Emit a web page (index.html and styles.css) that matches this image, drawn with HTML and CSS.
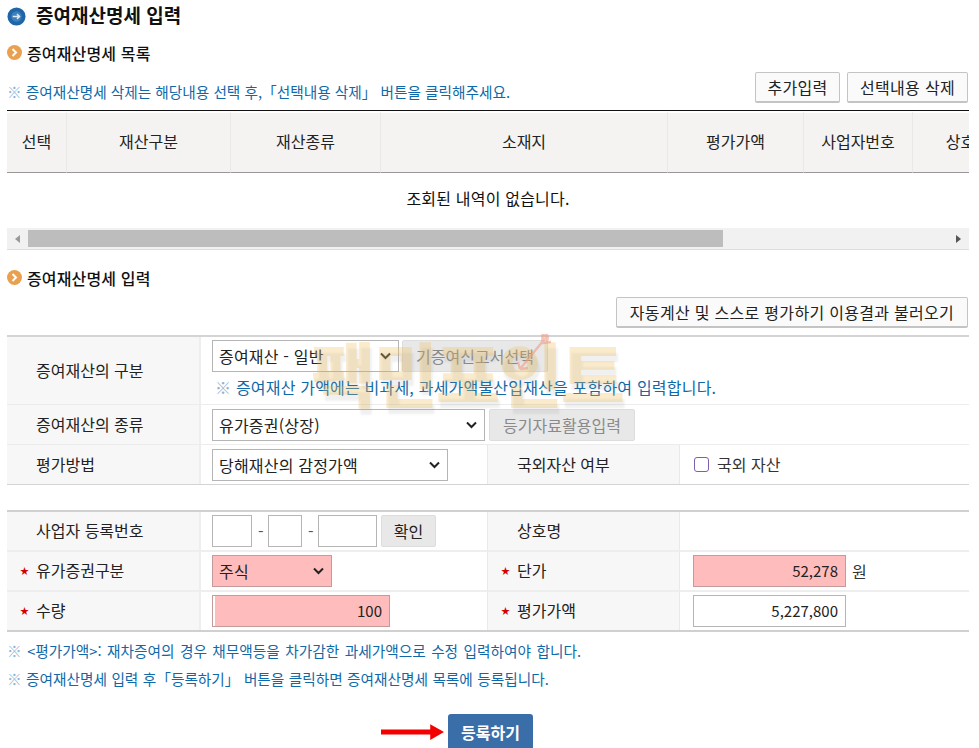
FILE: index.html
```html
<!DOCTYPE html>
<html lang="ko">
<head>
<meta charset="utf-8">
<title>증여재산명세 입력</title>
<link rel="stylesheet" href="styles.css">
</head>
<body>
<div class="page">
  <h1 class="title">
    <svg class="ico-blue" viewBox="0 0 20 20"><circle cx="10" cy="10" r="9.500" fill="#1f66a8"/><circle cx="10" cy="10" r="5.500" fill="#3f7fba"/><path d="M6 10h7M10.500 7.500 13.200 10l-2.700 2.500" fill="none" stroke="#dfe9f3" stroke-width="1.500"/></svg>
    <span>증여재산명세 입력</span>
  </h1>
  <h2 class="sub first">
    <svg class="ico-orange" viewBox="0 0 15 15"><circle cx="7.500" cy="7.500" r="7.500" fill="#e9a04f"/><path d="M5.500 4 9 7.500 5.500 11" fill="none" stroke="#fff" stroke-width="2"/></svg>
    <span>증여재산명세 목록</span>
  </h2>
  <div class="listbar">
    <p class="note"><span class="mark">※</span> 증여재산명세 삭제는 해당내용 선택 후,「선택내용 삭제」 버튼을 클릭해주세요.</p>
    <div class="btns">
      <button class="btn b-add">추가입력</button>
      <button class="btn b-del">선택내용 삭제</button>
    </div>
  </div>

  <div class="gridwrap">
    <table class="grid">
      <colgroup>
        <col class="c1"><col class="c2"><col class="c3"><col class="c4"><col class="c5"><col class="c6"><col class="c7">
      </colgroup>
      <thead>
        <tr><th>선택</th><th>재산구분</th><th>재산종류</th><th>소재지</th><th>평가가액</th><th>사업자번호</th><th>상호</th></tr>
      </thead>
      <tbody>
        <tr><td colspan="7" class="empty">조회된 내역이 없습니다.</td></tr>
      </tbody>
    </table>
    <div class="scroll">
      <span class="arr left"></span>
      <div class="track"><div class="thumb"></div></div>
      <span class="arr right"></span>
    </div>
  </div>

  <h2 class="sub second">
    <svg class="ico-orange" viewBox="0 0 15 15"><circle cx="7.500" cy="7.500" r="7.500" fill="#e9a04f"/><path d="M5.500 4 9 7.500 5.500 11" fill="none" stroke="#fff" stroke-width="2"/></svg>
    <span>증여재산명세 입력</span>
  </h2>
  <div class="autobar"><button class="btn b-auto">자동계산 및 스스로 평가하기 이용결과 불러오기</button></div>

  <div class="formwrap">
    <div class="watermark" aria-hidden="true">팩민포인트</div>
    <svg class="dart" viewBox="0 0 40 44" aria-hidden="true"><path d="M36 4 8 38M8 38l-2-7M8 38l8-1M36 4l-7 1M36 4l-1 7M31 3l-1 9 9-1" fill="none" stroke="#ee9d85" stroke-width="2.500" opacity=".6"/></svg>
    <table class="form f1">
      <colgroup><col class="l1"><col class="v1"><col class="l2"><col class="v2"></colgroup>
      <tr class="r-a">
        <th>증여재산의 구분</th>
        <td colspan="3">
          <div class="line">
            <div class="sel s-a">증여재산 - 일반<svg class="chev" viewBox="0 0 12 8"><path d="M1.500 1.500 6 6l4.500-4.500" fill="none" stroke="#222" stroke-width="2"/></svg></div>
            <button class="gbtn dis g-a">기증여신고서선택</button>
          </div>
          <p class="note inner"><span class="mark">※</span> 증여재산 가액에는 비과세, 과세가액불산입재산을 포함하여 입력합니다.</p>
        </td>
      </tr>
      <tr class="r-b">
        <th>증여재산의 종류</th>
        <td colspan="3">
          <div class="line">
            <div class="sel s-b">유가증권(상장)<svg class="chev" viewBox="0 0 12 8"><path d="M1.500 1.500 6 6l4.500-4.500" fill="none" stroke="#222" stroke-width="2"/></svg></div>
            <button class="gbtn dis g-b">등기자료활용입력</button>
          </div>
        </td>
      </tr>
      <tr class="r-c">
        <th>평가방법</th>
        <td>
          <div class="sel s-c">당해재산의 감정가액<svg class="chev" viewBox="0 0 12 8"><path d="M1.500 1.500 6 6l4.500-4.500" fill="none" stroke="#222" stroke-width="2"/></svg></div>
        </td>
        <th class="th2">국외자산 여부</th>
        <td><label class="chk"><span class="box"></span>국외 자산</label></td>
      </tr>
    </table>

    <table class="form f2">
      <colgroup><col class="l1"><col class="v1"><col class="l2"><col class="v2"></colgroup>
      <tr class="r-d">
        <th>사업자 등록번호</th>
        <td>
          <div class="line biz">
            <span class="inp w40"></span><span class="dash">-</span><span class="inp w34"></span><span class="dash">-</span><span class="inp w59"></span>
            <button class="gbtn g-c">확인</button>
          </div>
        </td>
        <th class="th2">상호명</th>
        <td></td>
      </tr>
      <tr class="r-e">
        <th><i class="star">★</i>유가증권구분</th>
        <td><div class="sel s-d pink">주식<svg class="chev" viewBox="0 0 12 8"><path d="M1.500 1.500 6 6l4.500-4.500" fill="none" stroke="#222" stroke-width="2"/></svg></div></td>
        <th class="th2"><i class="star">★</i>단가</th>
        <td><div class="line"><span class="inp money pink">52,278</span><span class="won">원</span></div></td>
      </tr>
      <tr class="r-e">
        <th><i class="star">★</i>수량</th>
        <td><span class="inp qty pink">100</span></td>
        <th class="th2"><i class="star">★</i>평가가액</th>
        <td><span class="inp money">5,227,800</span></td>
      </tr>
    </table>
  </div>

  <p class="note n1"><span class="mark">※</span> &lt;평가가액&gt;: 재차증여의 경우 채무액등을 차가감한 과세가액으로 수정 입력하여야 합니다.</p>
  <p class="note n2"><span class="mark">※</span> 증여재산명세 입력 후「등록하기」 버튼을 클릭하면 증여재산명세 목록에 등록됩니다.</p>

  <div class="submitrow">
    <svg class="arrow" viewBox="0 0 64 16"><path d="M0 5.500h50V0l14 8-14 8v-5.500H0z" fill="#f40000"/></svg>
    <button class="submit">등록하기</button>
  </div>
</div>
</body>
</html>
```
FILE: styles.css
```css
* { box-sizing: border-box; }
html, body { margin: 0; padding: 0; background: #fff; overflow: hidden; }
body {
  font-family: "Noto Sans CJK KR", "Noto Sans", sans-serif;
  font-size: 16px;
  color: #222;
}
.page { width: 969px; height: 748px; padding-left: 7px; overflow: hidden; }
.title {
  display: flex; align-items: center; gap: 10px;
  margin: 0; height: 32px;
  font-size: 19px; font-weight: 700; color: #111;
}
.title span { margin-top: -3px; }
.ico-blue { width: 19px; height: 19px; flex: none; }
.sub {
  display: flex; align-items: center; gap: 5px;
  margin: 0; font-size: 16px; font-weight: 500; color: #111;
  height: 20px;
}
.sub span { margin-top: -2px; letter-spacing: .15px; }
.sub.first { margin-top: 12px; }
.sub.second { margin-top: 19px; }
.ico-orange { width: 15px; height: 15px; flex: none; margin-top: -4px; }
.listbar {
  display: flex; justify-content: space-between; align-items: flex-end;
  height: 46px; padding-bottom: 7px;
}
.listbar .note { padding-bottom: 2px; }
.note { margin: 0; font-size: 14.66px; color: #0f69a8; line-height: 18px; }
.mark { color: #8db4d6; }
.btns { display: flex; gap: 7px; padding-right: 1px; }
.btn {
  font: inherit; font-size: 16px; color: #222; letter-spacing: .3px;
  height: 31px; padding: 0;
  background: #fafafa; border: 1px solid #c4c4c4; border-bottom-width: 2px;
  border-radius: 2px;
}
.b-add { width: 85px; } .b-del { width: 121px; } .b-auto { width: 352px; }
.gridwrap { width: 962px; overflow: hidden; }
.grid {
  width: 1002px; table-layout: fixed; border-collapse: separate; border-spacing: 0;
  border-top: 1px solid #111;
}
.c1 { width: 60px; } .c2 { width: 164px; } .c3 { width: 150px; } .c4 { width: 287px; }
.c5 { width: 136px; } .c6 { width: 109px; } .c7 { width: 96px; }
.grid th {
  height: 62px; padding: 0 0 3px;
  background: #f4f3f2; font-weight: 400; font-size: 16px; color: #222;
  border-top: 2px solid #fff; border-bottom: 1px solid #9c9599; border-right: 1px solid #ebe9e8;
}
.empty { height: 55px; text-align: center; font-size: 16px; letter-spacing: .2px; color: #111; padding: 0 40px 5px 0; }
.scroll {
  display: flex; align-items: center; height: 22px; background: #f1f1f1;
  border-bottom: 1px solid #ddd; padding: 2px 0;
}
.arr { width: 21px; flex: none; height: 100%; display: flex; align-items: center; justify-content: center; }
.arr::before { content: ""; width: 0; height: 0; border-top: 4px solid transparent; border-bottom: 4px solid transparent; }
.arr.left::before { border-right: 5px solid #999; }
.arr.right::before { border-left: 5px solid #555; }
.track { flex: 1; height: 100%; }
.thumb { width: 695px; height: 100%; background: #bdbdbd; }
.autobar { display: flex; justify-content: flex-end; padding-right: 1px; margin-top: 8px; }
.formwrap { position: relative; width: 962px; margin-top: 7px; }
.watermark {
  position: absolute; left: 304px; top: -3px; z-index: 2; pointer-events: none;
  font-size: 70px; font-weight: 900; line-height: 80px; letter-spacing: -2px;
  color: rgba(240, 190, 90, .3); white-space: nowrap;
  text-shadow: 2px 6px 2px rgba(130, 130, 130, .12);
}
.dart { position: absolute; left: 505px; top: -4px; width: 40px; height: 44px; z-index: 3; pointer-events: none; }
.form { width: 962px; table-layout: fixed; border-collapse: separate; border-spacing: 0; }
.l1 { width: 194px; } .v1 { width: 286px; } .l2 { width: 193px; } .v2 { width: 289px; }
.form th {
  background: #f7f7f7; font-weight: 400; font-size: 16px; color: #222;
  text-align: left; padding: 0 0 2px 29px; position: relative;
  border-right: 2px solid #eee;
}
.form td { padding: 0 0 0 11px; font-size: 16px; }
.form .th2 { border-left: 1px solid #e9e9e9; border-right: 1px solid #e9e9e9; padding-left: 29px; }
.form .th2 + td { padding-left: 13px; }
.f1 { border-top: 2px solid #d4d4d4; border-bottom: 1px solid #d4d4d4; }
.f2 { border-top: 2px solid #d0d0d0; border-bottom: 2px solid #d0d0d0; margin-top: 25px; }
.form tr + tr th, .form tr + tr td { border-top: 1px solid #ececec; }
.f2 tr + tr th, .f2 tr + tr td { border-top: 2px solid #eee; }
.r-a { height: 67px; } .r-b { height: 40px; } .r-c { height: 40px; }
.r-d { height: 38px; } .r-e { height: 40px; }
.f1 .r-a td { vertical-align: top; padding-top: 3px; }
.line { display: flex; align-items: center; gap: 6px; }
.sel {
  display: flex; align-items: center; justify-content: space-between;
  height: 32px; padding: 0 6px; background: #fff; border: 1px solid #b5b5b5;
  font-size: 16px; color: #222; letter-spacing: .2px;
}
.chev { width: 13px; height: 8px; flex: none; }
.s-a { width: 187px; } .s-b { width: 273px; } .s-c { width: 236px; } .s-d { width: 120px; }
.sel.pink { background: #ffbcbc; border-color: #c49a9a; }
.gbtn {
  font: inherit; font-size: 16px; height: 32px; padding: 0;
  background: #e8e8e8; border: 1px solid #ddd; border-radius: 2px; color: #222;
}
.gbtn.dis { color: #8a8a8a; }
.g-a { width: 146px; margin-left: -3px; } .g-b { width: 146px; margin-left: -2px; } .g-c { width: 55px; margin-left: -2px; }
.note.inner { margin-top: 5px; padding-left: 3px; font-size: 16px; letter-spacing: .2px; line-height: 20px; }
.chk { display: inline-flex; align-items: center; gap: 8px; padding-left: 1px; color: #333; }
.box { width: 15px; height: 15px; border: 1.500px solid #7f5fa5; border-radius: 3px; background: #fff; }
.inp {
  display: inline-block; height: 32px; line-height: 30px; background: #fff; border: 1px solid #b5b5b5;
  font-size: 15px; text-align: right; padding-right: 7px; color: #222;
}
.inp.pink { background: #ffbcbc; border-color: #c49a9a; }
.inp.qty { background: linear-gradient(90deg, #fff 2px, #ffbcbc 2px); }
.w40 { width: 40px; } .w34 { width: 34px; } .w59 { width: 59px; }
.dash { color: #555; width: 4px; text-align: center; }
.money { width: 153px; }
.qty { width: 178px; vertical-align: middle; }
.won { color: #333; }
.star { position: absolute; left: 13px; top: 50%; transform: translateY(-50%); color: #d40000; font-style: normal; font-size: 9px; line-height: 10px; }
.n1 { margin-top: 10px; word-spacing: 1.400px; }
.n2 { margin-top: 10px; word-spacing: .3px; }
.submitrow { display: flex; align-items: center; padding-left: 374px; gap: 4px; margin-top: 26px; }
.arrow { width: 63px; height: 16px; flex: none; }
.submit {
  font: inherit; font-size: 16px; font-weight: 700; color: #fff;
  width: 85px; height: 36px; background: #3a6ea8; border: 0; border-radius: 3px 3px 0 0;
}
```
